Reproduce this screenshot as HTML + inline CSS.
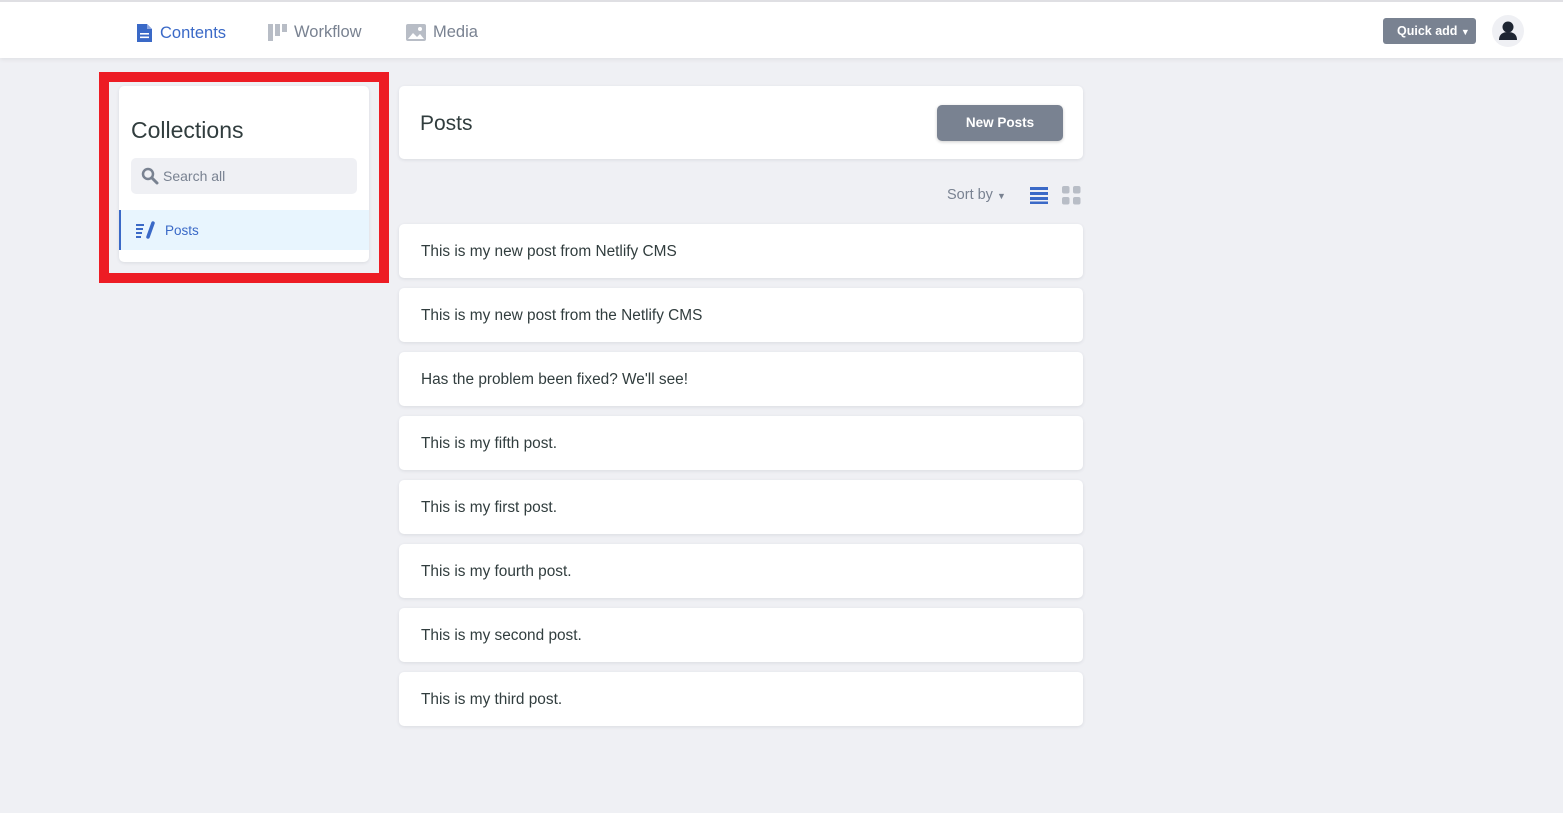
<!DOCTYPE html>
<html><head><style>
*{box-sizing:border-box;margin:0;padding:0}
body{width:1563px;height:813px;background:#eff0f4;font-family:"Liberation Sans",sans-serif;position:relative;overflow:hidden;color:#313d3e}
.hdr{position:absolute;left:0;top:0;width:1563px;height:58px;background:#fff;border-top:2px solid #dfdfe3;box-shadow:0 2px 4px rgba(0,0,0,.06)}
.nav{position:absolute;top:21px;font-size:16.5px;display:flex;align-items:center;gap:7px;color:#798291}
.card{position:absolute;background:#fff;border-radius:5px;box-shadow:0 1px 3px rgba(68,74,87,.12)}
.row{position:absolute;left:399px;width:684px;height:54px;background:#fff;border-radius:5px;box-shadow:0 1px 3px rgba(68,74,87,.12);font-size:15.4px;padding:19px 0 0 22px;color:#313d3e}
</style></head><body>
<div class="hdr">
 <div class="nav" style="left:136px;color:#3a69c7">
  <svg width="17" height="20" viewBox="0 0 17 20"><path d="M1 1h10l5 5v13H1z" fill="#3a69c7"/><path d="M11 1v5h5" fill="#8fa8e0"/><rect x="4" y="10" width="9" height="1.6" fill="#fff"/><rect x="4" y="13.5" width="9" height="1.6" fill="#fff"/></svg>
  <span>Contents</span></div>
 <div class="nav" style="left:268px">
  <svg width="19" height="17" viewBox="0 0 19 17"><rect x="0" y="0" width="5" height="17" fill="#b8bdc6"/><rect x="7" y="0" width="5" height="12" fill="#b8bdc6"/><rect x="14" y="0" width="5" height="8" fill="#b8bdc6"/></svg>
  <span>Workflow</span></div>
 <div class="nav" style="left:406px">
  <svg width="20" height="17" viewBox="0 0 20 17"><rect x="0" y="0" width="20" height="17" rx="2" fill="#b8bdc6"/><path d="M2 15l5-6 4 4 3-3 4 5z" fill="#fff"/><circle cx="14" cy="5" r="2" fill="#fff"/></svg>
  <span>Media</span></div>
 <div style="position:absolute;left:1383px;top:16px;width:93px;height:26px;background:#798291;border-radius:3px;color:#fff;font-size:12.5px;font-weight:bold;padding:6px 0 0 14px">Quick add <span style="font-size:9px">▼</span></div>
 <svg style="position:absolute;left:1491px;top:12px" width="34" height="34" viewBox="0 0 34 34"><circle cx="17" cy="17" r="16" fill="#eff0f4"/><circle cx="17" cy="13" r="5.5" fill="#1e2532"/><path d="M8 26c0-6 4-8 9-8s9 2 9 8z" fill="#1e2532"/></svg>
</div>

<div style="position:absolute;left:99px;top:72px;width:290px;height:211px;border:10px solid #ed1c24"></div>
<div class="card" style="left:119px;top:86px;width:250px;height:176px;overflow:hidden">
 <div style="position:absolute;left:12px;top:31px;font-size:23px;color:#313d3e">Collections</div>
 <div style="position:absolute;left:12px;top:72px;width:226px;height:36px;background:#eff0f4;border-radius:5px;font-size:14px;color:#798291;padding:10px 0 0 32px">Search all
  <svg style="position:absolute;left:10px;top:9px" width="18" height="18" viewBox="0 0 18 18"><circle cx="7" cy="7" r="5" fill="none" stroke="#798291" stroke-width="2.5"/><path d="M11 11l5 5" stroke="#798291" stroke-width="3" stroke-linecap="round"/></svg></div>
 <div style="position:absolute;left:0;top:124px;width:250px;height:40px;background:#e8f5fe;border-left:2px solid #3a69c7;font-size:13.5px;color:#3a69c7;padding:13px 0 0 44px">Posts
  <svg style="position:absolute;left:14px;top:11px" width="20" height="18" viewBox="0 0 20 18"><path d="M1 4h8M1 8h7M1 12h6M1 16h5" stroke="#3a69c7" stroke-width="2"/><path d="M13 16l5-14" stroke="#3a69c7" stroke-width="3.5" stroke-linecap="round"/></svg></div>
</div>

<div class="card" style="left:399px;top:86px;width:684px;height:73px">
 <div style="position:absolute;left:21px;top:26px;font-size:21px;color:#313d3e">Posts</div>
 <div style="position:absolute;left:538px;top:19px;width:126px;height:36px;background:#798291;border-radius:5px;color:#fff;font-size:13.5px;font-weight:bold;text-align:center;line-height:36px;box-shadow:0 1px 3px rgba(0,0,0,.2)">New Posts</div>
</div>
<div style="position:absolute;left:947px;top:187px;font-size:14.5px;color:#798291">Sort by <span style="font-size:9px">▼</span></div>
<svg style="position:absolute;left:1030px;top:186px" width="18" height="18" viewBox="0 0 18 18"><rect y="1" width="18" height="3" fill="#3a69c7"/><rect y="6" width="18" height="3" fill="#3a69c7"/><rect y="11" width="18" height="3" fill="#3a69c7"/><rect y="15.5" width="18" height="2.5" fill="#3a69c7"/></svg>
<svg style="position:absolute;left:1062px;top:186px" width="19" height="19" viewBox="0 0 19 19"><rect width="7.5" height="7.5" rx="2" fill="#b8bdc6"/><rect x="11" width="7.5" height="7.5" rx="2" fill="#b8bdc6"/><rect y="11" width="7.5" height="7.5" rx="2" fill="#b8bdc6"/><rect x="11" y="11" width="7.5" height="7.5" rx="2" fill="#b8bdc6"/></svg>

<div class="row" style="top:224px">This is my new post from Netlify CMS</div>
<div class="row" style="top:288px">This is my new post from the Netlify CMS</div>
<div class="row" style="top:352px">Has the problem been fixed? We'll see!</div>
<div class="row" style="top:416px">This is my fifth post.</div>
<div class="row" style="top:480px">This is my first post.</div>
<div class="row" style="top:544px">This is my fourth post.</div>
<div class="row" style="top:608px">This is my second post.</div>
<div class="row" style="top:672px">This is my third post.</div>
</body></html>
